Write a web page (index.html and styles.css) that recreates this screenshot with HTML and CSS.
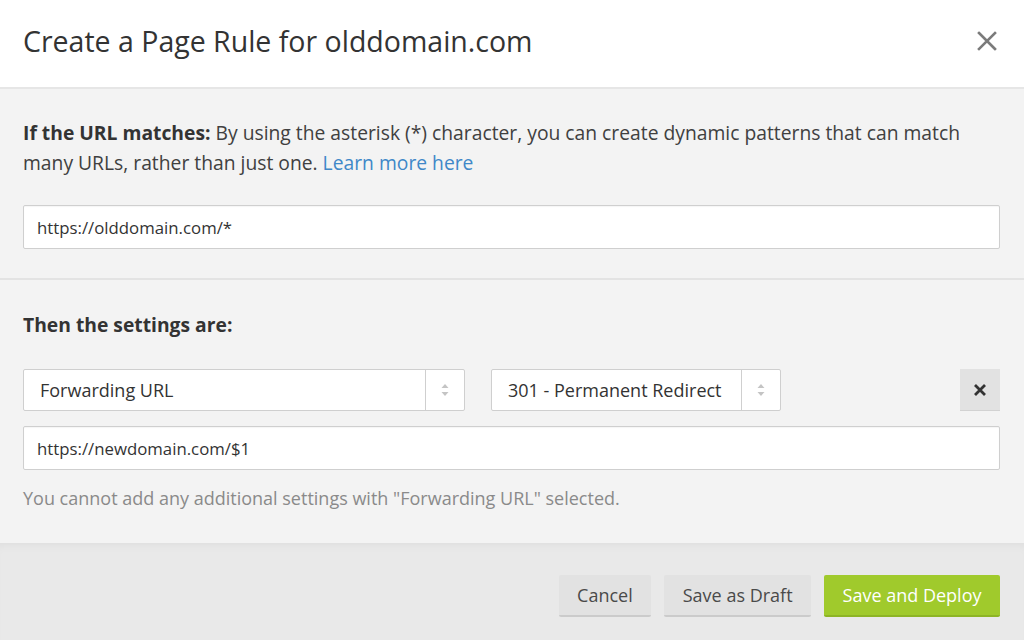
FILE: index.html
```html
<!DOCTYPE html>
<html lang="en">
<head>
<meta charset="utf-8">
<title>Create a Page Rule</title>
<link rel="stylesheet" href="styles.css">
</head>
<body>
<div class="modal">
  <header class="header">
    <h1 class="title">Create a Page Rule for olddomain.com</h1>
    <button class="close" aria-label="Close">
      <svg width="20" height="20" viewBox="0 0 20 20"><path d="M2 2L18 18M18 2L2 18" stroke="#7b7b7b" stroke-width="2.6" stroke-linecap="square"/></svg>
    </button>
  </header>
  <section class="section first">
    <p class="lead"><strong>If the URL matches:</strong> By using the asterisk (*) character, you can create dynamic patterns that can match many URLs, rather than just one. <a class="link" href="#">Learn more here</a></p>
    <div class="input">https://olddomain.com/*</div>
  </section>
  <section class="section second">
    <p class="lead"><strong>Then the settings are:</strong></p>
    <div class="row">
      <div class="select wide"><span class="select-text">Forwarding URL</span><span class="arrows"><svg width="8" height="14" viewBox="0 0 8 14"><path d="M4 1L7.5 5H0.5Z M4 13L7.5 9H0.5Z" fill="#c4c4c4"/></svg></span></div>
      <div class="select narrow"><span class="select-text">301 - Permanent Redirect</span><span class="arrows"><svg width="8" height="14" viewBox="0 0 8 14"><path d="M4 1L7.5 5H0.5Z M4 13L7.5 9H0.5Z" fill="#c4c4c4"/></svg></span></div>
      <button class="remove" aria-label="Remove"><svg width="14" height="14" viewBox="0 0 14 14"><path d="M2 2L12 12M12 2L2 12" stroke="#333" stroke-width="2.8"/></svg></button>
    </div>
    <div class="input second-input">https://newdomain.com/$1</div>
    <p class="help">You cannot add any additional settings with "Forwarding URL" selected.</p>
  </section>
  <footer class="footer">
    <button class="btn">Cancel</button>
    <button class="btn">Save as Draft</button>
    <button class="btn primary">Save and Deploy</button>
  </footer>
</div>
</body>
</html>
```
FILE: styles.css
```css
html, body {
  margin: 0;
  padding: 0;
}
body {
  font-family: "Open Sans", "Noto Sans", sans-serif;
  background: #f3f3f3;
  color: #333;
  width: 1024px;
  height: 640px;
  overflow: hidden;
}
.modal {
  display: flex;
  flex-direction: column;
  height: 640px;
}
.header {
  height: 89px;
  box-sizing: border-box;
  background: #fff;
  border-bottom: 2px solid #e6e6e6;
  display: flex;
  align-items: center;
  justify-content: space-between;
  padding: 0 27px 6px 23px;
}
.title {
  margin: 0;
  font-size: 28.5px;
  font-weight: 400;
  color: #333;
}
.close {
  border: 0;
  background: none;
  padding: 0;
  width: 20px;
  height: 20px;
  display: flex;
}
.section {
  padding: 0 24px 0 23px;
}
.first {
  padding-top: 29px;
  padding-bottom: 29px;
  border-bottom: 2px solid #e3e3e3;
}
.second {
  padding-top: 30px;
  padding-bottom: 33px;
}
.lead {
  margin: 0;
  font-size: 19.3px;
  line-height: 30px;
  color: #404040;
}
.lead strong {
  font-weight: 700;
  color: #333;
}
.link {
  color: #3f88c8;
  text-decoration: none;
}
.input {
  margin-top: 27px;
  height: 44px;
  box-sizing: border-box;
  background: #fff;
  border: 1px solid #cfcfcf;
  border-radius: 2px;
  box-shadow: inset 0 1px 1px rgba(0,0,0,0.04);
  font-size: 16.8px;
  color: #333;
  display: flex;
  align-items: center;
  padding: 0 13px;
}
.row {
  margin-top: 29px;
  display: flex;
  align-items: center;
}
.select {
  height: 42px;
  box-sizing: border-box;
  background: #fff;
  border: 1px solid #cfcfcf;
  border-radius: 2px;
  display: flex;
  align-items: stretch;
  font-size: 18px;
  color: #333;
}
.wide {
  width: 442px;
}
.narrow {
  width: 290px;
  margin-left: 26px;
}
.select-text {
  flex: 1;
  display: flex;
  align-items: center;
  padding-left: 16px;
}
.arrows {
  width: 38px;
  border-left: 1px solid #cfcfcf;
  display: flex;
  align-items: center;
  justify-content: center;
}
.remove {
  margin-left: auto;
  width: 40px;
  height: 42px;
  border: 0;
  background: #e2e2e2;
  border-bottom: 1px solid #d2d2d2;
  padding: 0;
  display: flex;
  align-items: center;
  justify-content: center;
}
.second-input {
  margin-top: 15px;
}
.help {
  margin: 16px 0 0;
  font-size: 18px;
  line-height: 24px;
  color: #8a8a8a;
}
.footer {
  flex: 1;
  background: #e9e9e9;
  box-shadow: inset 0 8px 10px -6px rgba(0,0,0,0.05);
  display: flex;
  justify-content: flex-end;
  align-items: flex-start;
  padding: 32px 24px 0 0;
  gap: 13px;
}
.btn {
  font-family: "Open Sans", "Noto Sans", sans-serif;
  font-size: 18px;
  height: 42px;
  padding: 0 18.5px;
  border: 0;
  border-bottom: 2px solid #cbcbcb;
  border-radius: 2px;
  background: #e2e2e2;
  color: #4a4a4a;
}
.primary {
  background: #a0ca2c;
  border-bottom-color: #8db425;
  color: #fff;
  padding: 0 18.5px;
}
```
